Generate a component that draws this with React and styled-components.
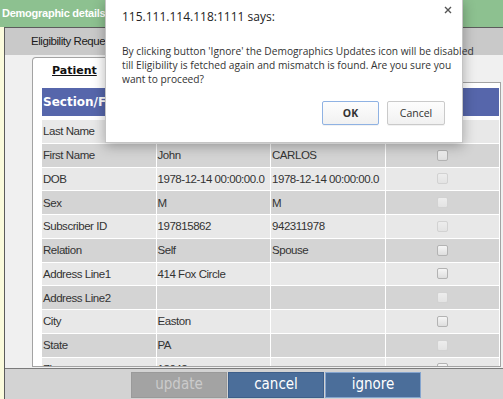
import React from "react";
import styled, { createGlobalStyle } from "styled-components";

const GlobalStyle = createGlobalStyle`
  html, body {
    margin: 0;
    padding: 0;
  }
  body {
    width: 503px;
    height: 399px;
    overflow: hidden;
    background: #fbfbdc;
    font-family: "Liberation Sans", Arial, sans-serif;
  }
`;

const rows = [
  { label: "Last Name", current: "Carlos", elig: "CARLOS", on: true },
  { label: "First Name", current: "John", elig: "CARLOS", on: true },
  { label: "DOB", current: "1978-12-14 00:00:00.0", elig: "1978-12-14 00:00:00.0", on: false },
  { label: "Sex", current: "M", elig: "M", on: false },
  { label: "Subscriber ID", current: "197815862", elig: "942311978", on: false },
  { label: "Relation", current: "Self", elig: "Spouse", on: true },
  { label: "Address Line1", current: "414 Fox Circle", elig: "", on: true },
  { label: "Address Line2", current: "", elig: "", on: false },
  { label: "City", current: "Easton", elig: "", on: true },
  { label: "State", current: "PA", elig: "", on: false },
  { label: "Zip", current: "18042", elig: "", on: true },
];

const App = () => {
  return (
    <Screen>
      <GlobalStyle />
      <TitleBar>Demographic details</TitleBar>
      <Frame>
        <TabStrip>Eligibility Request</TabStrip>
        <Body>
          <Tab>
            <span>Patient</span>
          </Tab>
          <Panel>
            <HeadRow>
              <HeadCell>Section/Field</HeadCell>
              <HeadCell>Current</HeadCell>
              <HeadCell>Eligibility</HeadCell>
              <HeadCell>Select</HeadCell>
            </HeadRow>
            <Rows>
              {rows.map((r, i) => (
                <React.Fragment key={r.label}>
                  <Cell $dark={i % 2 === 1}>{r.label}</Cell>
                  <Cell $dark={i % 2 === 1}>{r.current}</Cell>
                  <Cell $dark={i % 2 === 1}>{r.elig}</Cell>
                  <CheckCell $dark={i % 2 === 1}>
                    <Check $on={r.on} />
                  </CheckCell>
                </React.Fragment>
              ))}
            </Rows>
          </Panel>
        </Body>
        <Footer>
          <ActionButton $disabled>update</ActionButton>
          <ActionButton>cancel</ActionButton>
          <ActionButton $focus>ignore</ActionButton>
        </Footer>
      </Frame>

      <Dialog>
        <DialogTitle>115.111.114.118:1111 says:</DialogTitle>
        <Close>
          <svg width="8" height="8" viewBox="0 0 8 8">
            <path d="M1 1L7 7M7 1L1 7" stroke="#555" strokeWidth="1.4" />
          </svg>
        </Close>
        <Message>
          By clicking button 'Ignore' the Demographics Updates icon will be disabled
          <br />
          till Eligibility is fetched again and mismatch is found. Are you sure you
          <br />
          want to proceed?
        </Message>
        <DialogActions>
          <DialogButton $primary>OK</DialogButton>
          <DialogButton>Cancel</DialogButton>
        </DialogActions>
      </Dialog>
    </Screen>
  );
};

export default App;

const Screen = styled.div`
  position: relative;
  width: 503px;
  height: 399px;
  display: flex;
  flex-direction: column;
  overflow: hidden;
`;

const TitleBar = styled.div`
  height: 27px;
  flex-shrink: 0;
  background: #8dc190;
  color: #fff;
  font-weight: bold;
  font-size: 11px;
  letter-spacing: -0.25px;
  line-height: 27px;
  padding-left: 2px;
`;

const Frame = styled.div`
  flex: 1;
  margin-left: 4px;
  border-left: 1px solid #5c5c5c;
  border-top: 1px solid #5c5c5c;
  display: flex;
  flex-direction: column;
  min-height: 0;
`;

const TabStrip = styled.div`
  height: 27px;
  flex-shrink: 0;
  background: #c9c9c9;
  color: #1c1c1c;
  font-size: 11.5px;
  letter-spacing: -0.45px;
  line-height: 27px;
  padding-left: 26px;
`;

const Body = styled.div`
  flex: 1;
  min-height: 0;
  background: #f0f0f0;
  padding: 2px 2px 1px 27px;
  display: flex;
  flex-direction: column;
`;

const Tab = styled.div`
  position: relative;
  z-index: 1;
  width: 82px;
  height: 25px;
  margin-bottom: -1px;
  background: #fff;
  border: 1px solid #a3a3a3;
  border-bottom: none;
  border-radius: 4px 4px 0 0;
  padding-left: 19px;
  box-sizing: content-box;
  display: flex;
  align-items: center;
  font-family: "DejaVu Sans", Verdana, sans-serif;
  font-weight: bold;
  font-size: 11px;
  color: #111;
  text-decoration: underline;
`;

const Panel = styled.div`
  flex: 1;
  min-height: 0;
  overflow: hidden;
  background: #fff;
  border: 1px solid #a3a3a3;
  padding: 5px 1px 0 9px;
`;

const HeadRow = styled.div`
  display: grid;
  grid-template-columns: repeat(4, 1fr);
  column-gap: 1px;
  width: 457px;
  height: 28px;
  background: #5666ab;
  margin-bottom: 4px;
`;

const HeadCell = styled.div`
  display: flex;
  align-items: center;
  padding-left: 1px;
  color: #fff;
  font-family: "DejaVu Sans", Verdana, sans-serif;
  font-weight: bold;
  font-size: 12px;
`;

const Rows = styled.div`
  display: grid;
  grid-template-columns: repeat(4, 1fr);
  grid-auto-rows: 22.75px;
  gap: 1px;
  width: 457px;
`;

const Cell = styled.div`
  display: flex;
  align-items: center;
  padding-left: 1px;
  background: ${(p) => (p.$dark ? "#d4d4d4" : "#e8e8e8")};
  color: #333;
  font-size: 11.5px;
  letter-spacing: -0.45px;
  white-space: nowrap;
  overflow: hidden;
`;

const CheckCell = styled(Cell)`
  justify-content: center;
  padding-left: 0;
`;

const Check = styled.span`
  width: 9px;
  height: 9px;
  border-radius: 2px;
  border: 1px solid ${(p) => (p.$on ? "#b3b3b3" : "#d2d2d2")};
  background: ${(p) =>
    p.$on
      ? "linear-gradient(#f6f6f6, #dedede)"
      : "linear-gradient(#ededed, #e3e3e3)"};
`;

const Footer = styled.div`
  height: 27px;
  flex-shrink: 0;
  border-top: 1px solid #7b7b7b;
  background: #d3d3d3;
  display: flex;
  align-items: flex-start;
  gap: 1px;
  padding: 3px 0 0 126px;
`;

const ActionButton = styled.div`
  width: 96px;
  height: 26px;
  box-sizing: border-box;
  border: 1px solid
    ${(p) => (p.$disabled ? "#9a9a9a" : p.$focus ? "#85a5cf" : "#3e5f8a")};
  background: ${(p) => (p.$disabled ? "#a3a3a3" : "#4b6e9a")};
  color: ${(p) => (p.$disabled ? "#cbcbcb" : "#fff")};
  font-family: "DejaVu Sans Condensed", "DejaVu Sans", Verdana, sans-serif;
  font-stretch: condensed;
  font-size: 15px;
  line-height: 23px;
  text-align: center;
`;

const Dialog = styled.div`
  position: absolute;
  z-index: 10;
  top: 0;
  left: 105px;
  width: 358px;
  height: 143px;
  box-sizing: border-box;
  background: #fff;
  border: 1px solid #c4c4c4;
  border-top: none;
  box-shadow: 0 3px 12px rgba(0, 0, 0, 0.3);
  padding: 8px 17px 0 16px;
  font-family: "Open Sans", "Noto Sans", sans-serif;
  color: #333;
`;

const DialogTitle = styled.div`
  font-size: 12px;
  line-height: 18px;
  color: #222;
`;

const Close = styled.div`
  position: absolute;
  top: 6px;
  right: 10px;
  width: 8px;
  height: 8px;
  line-height: 0;
`;

const Message = styled.div`
  margin-top: 18px;
  margin-right: -13px;
  font-size: 10.2px;
  line-height: 14px;
  white-space: nowrap;
`;

const DialogActions = styled.div`
  display: flex;
  justify-content: flex-end;
  gap: 8px;
  margin-top: 15px;
`;

const DialogButton = styled.div`
  width: ${(p) => (p.$primary ? "57px" : "58px")};
  height: 24px;
  box-sizing: border-box;
  border: 1px solid ${(p) => (p.$primary ? "#8fb2e3" : "#cacaca")};
  border-radius: 2px;
  background: linear-gradient(#fdfdfd, #f1f1f1);
  box-shadow: 0 1px 0 rgba(0, 0, 0, 0.05);
  font-size: 10.5px;
  font-weight: ${(p) => (p.$primary ? "bold" : "normal")};
  line-height: 22px;
  text-align: center;
  color: #333;
`;
